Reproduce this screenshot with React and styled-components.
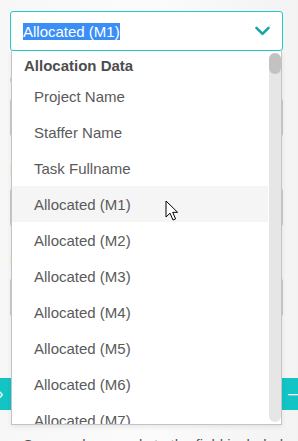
import styled, {createGlobalStyle} from "styled-components";

const GlobalStyle = createGlobalStyle`
  html, body {
    margin: 0;
    padding: 0;
    background: #f6f6f6;
    font-family: "Liberation Sans", Arial, sans-serif;
    overflow: hidden;
  }
`

const Page = styled.div`
  position: relative;
  width: 298px;
  height: 441px;
  box-sizing: border-box;
  padding: 11px 15px 0 10px;
  background: linear-gradient(90deg, #f7f7f7 0%, #fbfbfb 50%, #f3f3f3 100%);
  overflow: hidden;
`

const Form = styled.div`
  display: flex;
  flex-direction: column;
  gap: 16px;
`

const SelectWrap = styled.div`
  position: relative;
  z-index: 5;
`

const SelectBox = styled.div`
  display: flex;
  align-items: center;
  justify-content: space-between;
  height: 40px;
  box-sizing: border-box;
  padding: 0 12px 0 12px;
  background: #fff;
  border: 1px solid #22c9c9;
  border-radius: 3px;
`

const SelectedText = styled.span`
  font-size: 15px;
  line-height: 17px;
  color: #fff;
  background: #3a8ef6;
`

const Menu = styled.div`
  position: absolute;
  top: 40px;
  left: 1px;
  width: 271px;
  height: 374px;
  box-sizing: border-box;
  display: flex;
  background: #fff;
  border: 1px solid #c4c4c4;
  border-top: none;
  box-shadow: 0 2px 5px rgba(0, 0, 0, 0.08);
  overflow: hidden;
`

const List = styled.div`
  flex: 1;
  display: flex;
  flex-direction: column;
  padding-top: 2px;
`

const GroupTitle = styled.div`
  padding: 3px 12px 2px;
  line-height: 20px;
  font-size: 15px;
  font-weight: bold;
  color: #4d4d4d;
`

const Option = styled.div`
  flex: none;
  height: 36px;
  line-height: 37px;
  padding-left: 22px;
  font-size: 15px;
  color: #5a5a5a;
  background: ${p => (p.$hover ? "#f5f5f5" : "transparent")};
`

const ScrollTrack = styled.div`
  flex: none;
  width: 12px;
  margin: 2px 0 2px 1px;
  border-radius: 6px;
  background: #e6e6e6;
  display: flex;
  flex-direction: column;
`

const ScrollThumb = styled.div`
  height: 21px;
  border-radius: 6px;
  background: #c2c2c2;
`

const Cursor = styled.svg`
  position: absolute;
  left: 155px;
  top: 189px;
`

const Field = styled.div`
  display: flex;
  flex-direction: column;
  padding-bottom: 4px;
`

const Label = styled.div`
  height: 31px;
  line-height: 26px;
  font-size: 14px;
  color: ${p => (p.$warn ? "#e8a33d" : "#555")};
`

const Input = styled.div`
  height: 39px;
  box-sizing: border-box;
  background: #fff;
  border: 1px solid #c9c9c9;
  border-radius: 3px;
`

const ActionBar = styled.div`
  display: flex;
  justify-content: space-between;
  align-items: center;
  height: 32px;
  margin: 57px -15px 0 -10px;
  background: #12c4c4;
  color: #fff;
  font-size: 16px;
`

const BarGlyph = styled.span`
  margin-left: ${p => (p.$right ? "0" : "-2px")};
  margin-right: ${p => (p.$right ? "-6px" : "0")};
`

const Note = styled.div`
  margin-top: 25px;
  padding-left: 13px;
  font-size: 15px;
  line-height: 20px;
  color: #555;
  white-space: nowrap;
`

const Chevron = () => (
    <svg width="15" height="10" viewBox="0 0 15 10">
        <path d="M1.5 1.8 L7.5 7.8 L13.5 1.8" fill="none" stroke="#17a5a5" strokeWidth="2.6"
              strokeLinecap="round" strokeLinejoin="round"/>
    </svg>
)

const options = [
    "Project Name", "Staffer Name", "Task Fullname",
    "Allocated (M1)", "Allocated (M2)", "Allocated (M3)", "Allocated (M4)",
    "Allocated (M5)", "Allocated (M6)", "Allocated (M7)", "Allocated (M8)",
];

export default function App() {
    return (
        <Page>
            <GlobalStyle/>
            <Form>
                <SelectWrap>
                    <SelectBox>
                        <SelectedText>Allocated (M1)</SelectedText>
                        <Chevron/>
                    </SelectBox>
                    <Menu>
                        <List>
                            <GroupTitle>Allocation Data</GroupTitle>
                            {options.map(o => (
                                <Option key={o} $hover={o === "Allocated (M1)"}>{o}</Option>
                            ))}
                        </List>
                        <ScrollTrack><ScrollThumb/></ScrollTrack>
                    </Menu>
                    <Cursor width="14" height="22" viewBox="0 0 14 22">
                        <path d="M1 1 L1 17 L5 13.2 L8 20 L10.6 18.9 L7.7 12.3 L12.6 12.3 Z"
                              fill="#fff" stroke="#000" strokeWidth="1" strokeLinejoin="round"/>
                    </Cursor>
                </SelectWrap>
                <Field>
                    <Label>Column</Label>
                    <Input/>
                </Field>
                <Field>
                    <Label>Header</Label>
                    <Input/>
                </Field>
                <Field>
                    <Label $warn>Format</Label>
                    <Input/>
                </Field>
            </Form>
            <ActionBar>
                <BarGlyph>›</BarGlyph>
                <BarGlyph $right>—</BarGlyph>
            </ActionBar>
            <Note>Some values apply to the field included</Note>
        </Page>
    );
}
